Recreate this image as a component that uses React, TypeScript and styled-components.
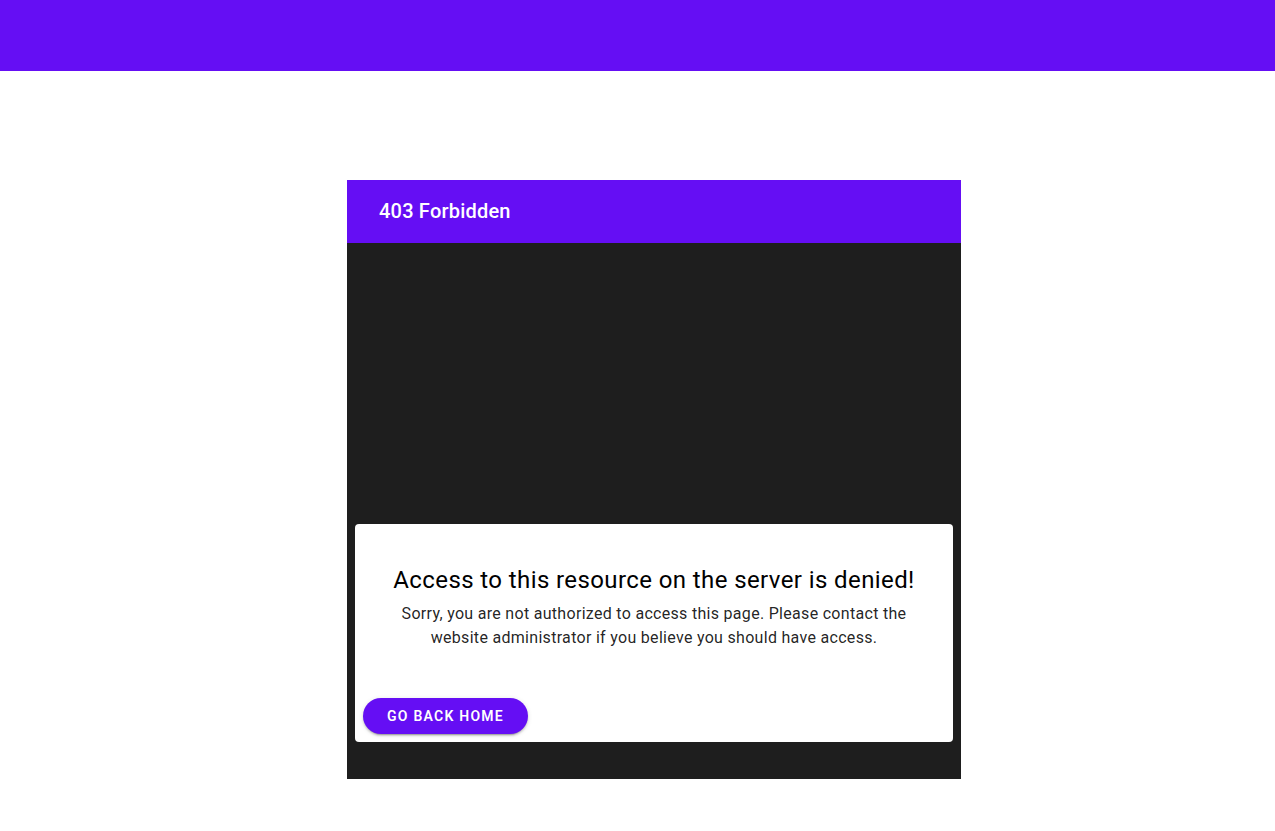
import React from "react";
import styled, { createGlobalStyle } from "styled-components";

const GlobalStyle = createGlobalStyle`
  html, body {
    margin: 0;
    padding: 0;
    background: #ffffff;
    font-family: Roboto, "Liberation Sans", Arial, sans-serif;
  }
`;

const Page = styled.div`
  min-height: 831px;
  display: flex;
  flex-direction: column;
`;

const TopBar = styled.header`
  height: 71px;
  background-color: #650ef4;
`;

const Main = styled.main`
  display: flex;
  justify-content: center;
  padding: 109px 0 0 33px;
`;

const Panel = styled.section`
  width: 614px;
  display: flex;
  flex-direction: column;
`;

const PanelHeader = styled.div`
  height: 63px;
  box-sizing: border-box;
  display: flex;
  align-items: center;
  padding: 0 32px 1px;
  background-color: #650ef4;
`;

const PanelTitle = styled.h1`
  margin: 0;
  color: #ffffff;
  font-size: 20px;
  font-weight: 500;
  letter-spacing: 0.2px;
`;

const PanelBody = styled.div`
  height: 536px;
  box-sizing: border-box;
  background-color: #1e1e1e;
  display: flex;
  flex-direction: column;
  justify-content: flex-end;
  padding: 8px 8px 37px;
`;

const Card = styled.div`
  background: #ffffff;
  border-radius: 4px;
  display: flex;
  flex-direction: column;
`;

const CardContent = styled.div`
  padding: 40px 32px 0;
  text-align: center;
`;

const Heading = styled.h2`
  margin: 0;
  font-size: 24px;
  line-height: 32px;
  font-weight: 400;
  letter-spacing: 0.4px;
  color: #000000;
`;

const Message = styled.p`
  margin: 6px 0 0;
  font-size: 16px;
  line-height: 24px;
  letter-spacing: 0.3px;
  color: rgba(0, 0, 0, 0.87);
`;

const Actions = styled.div`
  display: flex;
  padding: 48px 8px 8px;
`;

const Button = styled.button<{ $bg?: string }>`
  height: 36px;
  padding: 0 24px;
  border: none;
  border-radius: 18px;
  background-color: ${(p) => p.$bg || "#650ef4"};
  color: #ffffff;
  font-family: Roboto, "Liberation Sans", Arial, sans-serif;
  font-size: 14px;
  font-weight: 600;
  letter-spacing: 1.25px;
  text-transform: uppercase;
  cursor: pointer;
  box-shadow: 0 3px 1px -2px rgba(0, 0, 0, 0.2), 0 2px 2px 0 rgba(0, 0, 0, 0.14),
    0 1px 5px 0 rgba(0, 0, 0, 0.12);
`;

export default function App() {
  return (
    <Page>
      <GlobalStyle />
      <TopBar />
      <Main>
        <Panel>
          <PanelHeader>
            <PanelTitle>403 Forbidden</PanelTitle>
          </PanelHeader>
          <PanelBody>
            <Card>
              <CardContent>
                <Heading>Access to this resource on the server is denied!</Heading>
                <Message>
                  Sorry, you are not authorized to access this page. Please
                  contact the website administrator if you believe you should
                  have access.
                </Message>
              </CardContent>
              <Actions>
                <Button>Go Back Home</Button>
              </Actions>
            </Card>
          </PanelBody>
        </Panel>
      </Main>
    </Page>
  );
}
